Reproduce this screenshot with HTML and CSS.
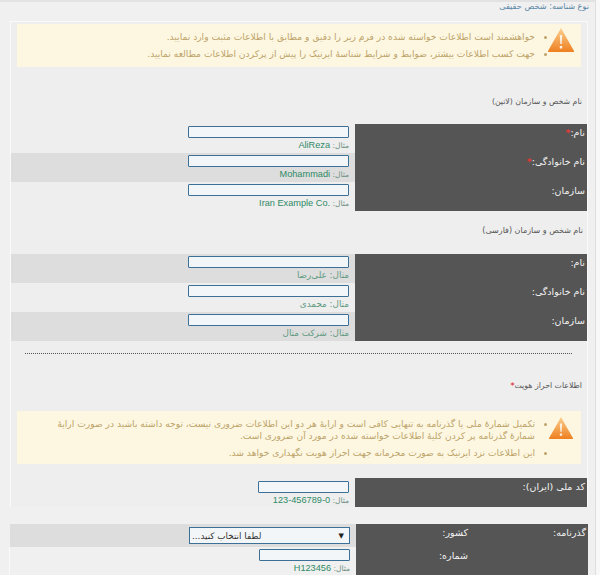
FILE: index.html
```html
<!DOCTYPE html>
<html dir="rtl" lang="fa">

<head>
  <meta charset="utf-8">
  <title>Nic form</title>
  <link rel="stylesheet" href="styles.css">
</head>

<body>
  <div class="topLine"></div>
  <div class="typeLine">نوع شناسه: شخص حقیقی</div>

  <div class="panel">
    <div class="notice noticeFirst">
      <svg class="warnIcon" viewBox="0 0 28 26" width="28" height="26">
        <defs>
          <linearGradient id="warnFill" x1="0" y1="0" x2="0" y2="1">
            <stop offset="0" stop-color="#fbcf8f"/>
            <stop offset="1" stop-color="#ee7f1f"/>
          </linearGradient>
        </defs>
        <path d="M14 1 L27 24 Q27.500 25 26 25 L2 25 Q.5 25 1 24 Z" fill="url(#warnFill)"/>
        <path d="M12.800 8 H15.200 L14.700 17 H13.300 Z M12.800 19 H15.200 V21.500 H12.800 Z" fill="#fdf1e2"/>
      </svg>
      <ul class="noticeList">
        <li>خواهشمند است اطلاعات خواسته شده در فرم زیر را دقیق و مطابق با اطلاعات مثبت وارد نمایید.</li>
        <li>جهت کسب اطلاعات بیشتر، ضوابط و شرایط شناسهٔ ایرنیک را پیش از پرکردن اطلاعات مطالعه نمایید.</li>
      </ul>
    </div>

    <h4 class="sectionTitle titleLatin">نام شخص و سازمان (لاتین)</h4>
    <div class="formTable">
      <div class="formRow">
        <div class="rowLabel">نام:<span class="req">*</span></div>
        <div class="rowValue"><input class="textBox" type="text"><div class="hint">مثال: <span class="hintValue">AliReza</span></div></div>
      </div>
      <div class="formRow rowAlt">
        <div class="rowLabel">نام خانوادگی:<span class="req">*</span></div>
        <div class="rowValue"><input class="textBox" type="text"><div class="hint">مثال: <span class="hintValue">Mohammadi</span></div></div>
      </div>
      <div class="formRow">
        <div class="rowLabel">سازمان:</div>
        <div class="rowValue"><input class="textBox" type="text"><div class="hint">مثال: <span class="hintValue">Iran Example Co.</span></div></div>
      </div>
    </div>

    <h4 class="sectionTitle titleFarsi">نام شخص و سازمان (فارسی)</h4>
    <div class="formTable">
      <div class="formRow rowAlt">
        <div class="rowLabel">نام:</div>
        <div class="rowValue"><input class="textBox" type="text"><div class="hint hintFarsi">مثال: علی‌رضا</div></div>
      </div>
      <div class="formRow">
        <div class="rowLabel">نام خانوادگی:</div>
        <div class="rowValue"><input class="textBox" type="text"><div class="hint hintFarsi">مثال: محمدی</div></div>
      </div>
      <div class="formRow rowAlt">
        <div class="rowLabel">سازمان:</div>
        <div class="rowValue"><input class="textBox" type="text"><div class="hint hintFarsi">مثال: شرکت مثال</div></div>
      </div>
    </div>

    <div class="dotLine"></div>

    <h4 class="sectionTitle titleId">اطلاعات احراز هویت<span class="req">*</span></h4>
    <div class="notice noticeSecond">
      <svg class="warnIcon" viewBox="0 0 28 26" width="28" height="24">
        <path d="M14 1 L27 24 Q27.500 25 26 25 L2 25 Q.5 25 1 24 Z" fill="url(#warnFill)"/>
        <path d="M12.800 8 H15.200 L14.700 17 H13.300 Z M12.800 19 H15.200 V21.500 H12.800 Z" fill="#fdf1e2"/>
      </svg>
      <ul class="noticeList">
        <li>تکمیل شمارهٔ ملی یا گذرنامه به تنهایی کافی است و ارایهٔ هر دو این اطلاعات ضروری نیست، توجه داشته باشید در صورت ارایهٔ شمارهٔ گذرنامه پر کردن کلیهٔ اطلاعات خواسته شده در مورد آن ضروری است.</li>
        <li>این اطلاعات نزد ایرنیک به صورت محرمانه جهت احراز هویت نگهداری خواهد شد.</li>
      </ul>
    </div>

    <div class="formTable tableId">
      <div class="formRow">
        <div class="rowLabel">کد ملی (ایران):</div>
        <div class="rowValue"><input class="textBox textShort" type="text"><div class="hint">مثال: <span class="hintValue">123-456789-0</span></div></div>
      </div>
    </div>
  </div>

  <div class="passport">
    <div class="passRow rowAlt">
      <div class="rowLabel passLabel">
        <span>گذرنامه:</span>
        <span class="passSub">کشور:</span>
      </div>
      <div class="rowValue">
        <div class="selectBox"><span class="selectArrow">▼</span><span class="selectText">لطفا انتخاب کنید...</span></div>
      </div>
    </div>
    <div class="passRow">
      <div class="rowLabel passLabel">
        <span></span>
        <span class="passSub">شماره:</span>
      </div>
      <div class="rowValue"><input class="textBox textShort" type="text"><div class="hint">مثال: <span class="hintValue">H123456</span></div></div>
    </div>
  </div>
</body>

</html>
```

FILE: styles.css
```css
html, body {
  height: 575px;
  overflow: hidden;
}

html {
  background-color: #f8f8f8;
}

body {
  margin: 0 4px 0 0;
  border-right: 1px solid #dedede;
  background-color: #f0f0f0;
  font-family: "DejaVu Sans", sans-serif;
  font-size: 8.5px;
  color: #444;
}

.topLine {
  height: 2px;
  background-color: #e2e2e2;
}

.typeLine {
  height: 19px;
  padding-right: 6px;
  box-sizing: border-box;
  line-height: 8px;
  color: #5a87a6;
  font-size: 8.200px;
}

.panel {
  width: 578px;
  margin-right: 7px;
  height: 486px;
  box-sizing: border-box;
  background-color: #eeeeee;
  border: 1px solid #fafafa;
  border-bottom: 0;
}

.notice {
  display: flex;
  align-items: flex-start;
  margin: 0 6px 0 6px;
  background-color: #fdf7e1;
  color: #bca36a;
  font-size: 9.150px;
}

.noticeFirst {
  height: 43px;
  margin-top: 2px;
}

.noticeFirst .warnIcon {
  margin-top: 3px;
}

.noticeSecond {
  height: 53px;
  margin-top: 19px;
}

.noticeSecond .warnIcon {
  margin-top: 5px;
}

.warnIcon {
  flex: none;
  margin-right: 6px;
}

.noticeList {
  margin: 0;
  padding: 6px 12px 0 8px;
  list-style: disc;
  line-height: 15px;
}

.noticeList li {
  margin-bottom: 1.500px;
}

.noticeSecond .noticeList {
  padding-top: 7px;
  padding-left: 30px;
  line-height: 12px;
}

.noticeSecond .noticeList li {
  margin-bottom: 4.500px;
}

.sectionTitle {
  margin: 0;
  padding-right: 5px;
  font-size: 7.800px;
  font-weight: normal;
  line-height: 12px;
  color: #555;
}

.titleLatin {
  padding-top: 29px;
  padding-bottom: 16px;
}

.titleFarsi {
  padding-top: 14px;
  padding-bottom: 17px;
  padding-right: 4px;
  font-size: 8px;
}

.titleId {
  padding-top: 26px;
}

.req {
  color: #e03a3a;
  font-weight: bold;
}

.formTable {
  margin: 0;
}

.tableId {
  margin-top: 14px;
}

.tableId .rowValue {
  padding-top: 3px;
}

.formRow {
  display: flex;
  height: 29px;
}

.rowAlt {
  background-color: #dddddd;
}

.rowLabel {
  flex: none;
  width: 232px;
  box-sizing: border-box;
  padding: 3px 2px 0 0;
  background-color: #555555;
  color: #f2f2f2;
  font-size: 9.500px;
  line-height: 12px;
}

.rowValue {
  padding: 2px 6px 0 0;
}

.textBox {
  display: block;
  width: 161px;
  height: 12px;
  box-sizing: border-box;
  margin: 0;
  padding: 0;
  border: 1px solid #3d7096;
  border-radius: 1px;
  background-color: #f3f6f9;
}

.textShort {
  width: 91px;
}

.hint {
  height: 13px;
  font-size: 7.500px;
  line-height: 14px;
  color: #6d8f80;
}

.hintValue {
  direction: ltr;
  unicode-bidi: isolate;
  font-family: "Liberation Sans", sans-serif;
  font-size: 9.200px;
  color: #2f8a66;
}

.hintFarsi {
  font-size: 8.800px;
  color: #5f9a80;
}

.dotLine {
  margin: 12px 15px 0 14px;
  border-top: 1px dotted #555;
}

.passport {
  width: 578px;
  margin-top: 17px;
  margin-right: 7px;
}

.passRow {
  display: flex;
  height: 23px;
}

.passRow + .passRow {
  height: 30px;
  box-shadow: -1px 0 0 #fafafa;
}

.passLabel {
  display: flex;
  padding-top: 3px;
}

.passLabel span:first-child {
  width: 118px;
  flex: none;
}

.selectBox {
  display: flex;
  justify-content: space-between;
  align-items: center;
  width: 161px;
  height: 17px;
  margin-top: 1px;
  box-sizing: border-box;
  padding: 0 5px 0 2px;
  border: 1px solid #3d7096;
  background-color: #f3f6f9;
  color: #333;
  font-size: 8.800px;
}

.selectArrow {
  font-size: 7px;
  color: #222;
}
```
